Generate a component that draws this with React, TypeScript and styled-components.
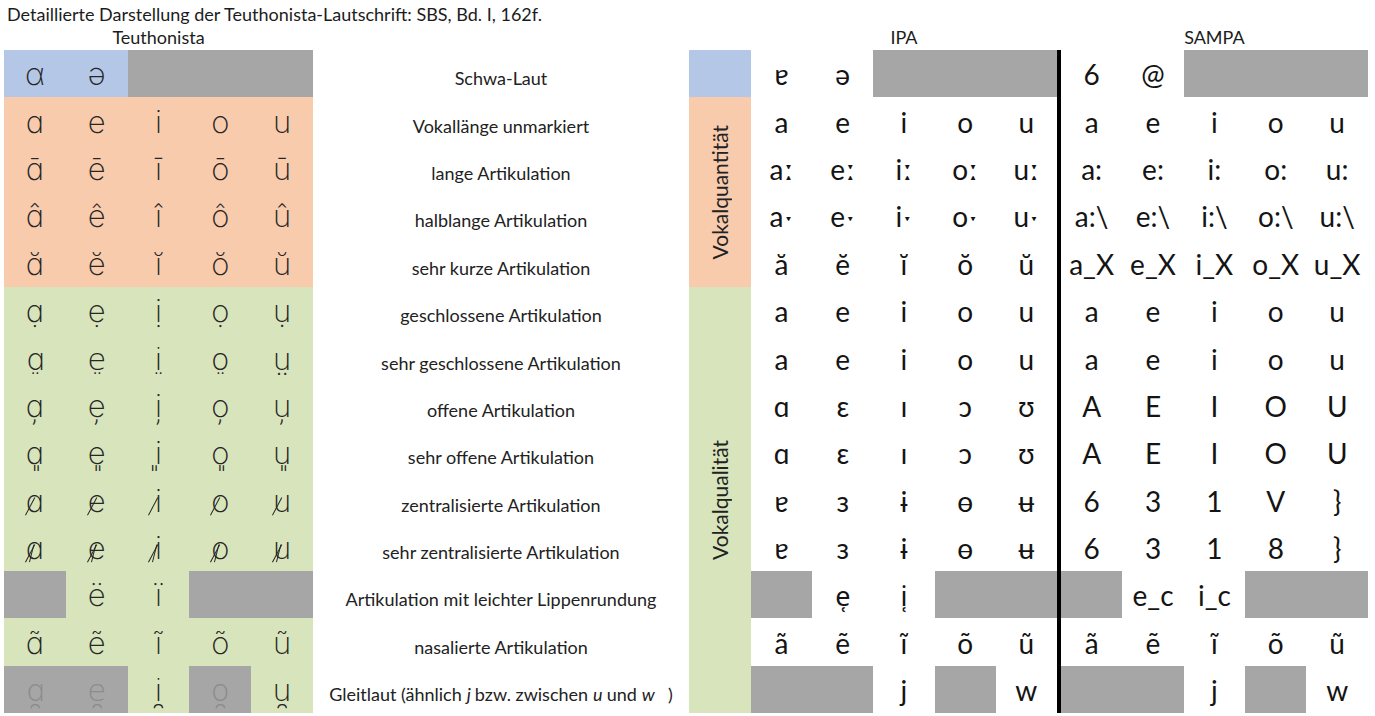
import React from 'react';
import styled, { createGlobalStyle, css } from 'styled-components';

const BLUE = '#b4c7e7';
const ORANGE = '#f8cbad';
const GREEN = '#d8e4bc';
const GRAY = '#a6a6a6';

const COLUMNS = 'repeat(5, 61.8px) 376px 62px repeat(5, 61.2px) 4px repeat(5, 61.4px)';

const GlobalStyle = createGlobalStyle`
  html, body {
    margin: 0;
    padding: 0;
    background: #ffffff;
  }
  body {
    font-family: Lato, "Open Sans", "Noto Sans", "DejaVu Sans", sans-serif;
    color: #1c1c1c;
  }
`;

const Page = styled.div`
  width: 1375px;
  height: 716px;
  padding-left: 4px;
  box-sizing: border-box;
  overflow: hidden;
`;

const Title = styled.div`
  height: 26px;
  box-sizing: border-box;
  padding: 5px 0 0 3px;
  font-size: 18px;
  line-height: 18px;
  white-space: nowrap;
`;

const HeaderRow = styled.div`
  display: grid;
  grid-template-columns: ${COLUMNS};
  height: 24px;
`;

const HeaderLabel = styled.div<{ $cols: string }>`
  grid-column: ${p => p.$cols};
  text-align: center;
  font-size: 18px;
  line-height: 18px;
  padding-top: 2px;
`;

const Sheet = styled.div`
  display: grid;
  grid-template-columns: ${COLUMNS};
  grid-template-rows: repeat(14, 47.36px);
`;

const BaseCell = styled.div`
  display: flex;
  align-items: flex-end;
  justify-content: center;
  box-sizing: border-box;
  white-space: nowrap;
`;

const TeuthCell = styled(BaseCell)<{ $bg: string; $muted?: boolean }>`
  background: ${p => p.$bg};
  color: ${p => (p.$muted ? '#8c8c8c' : '#262626')};
  font-family: Inter, "DejaVu Sans", sans-serif;
  font-weight: 200;
  font-size: 31px;
  line-height: 1;
  padding-bottom: 8px;
`;

const Glyph = styled.span<{ $slash?: number }>`
  position: relative;
  display: inline-block;
  ${p =>
    p.$slash &&
    css`
      &::before,
      &::after {
        content: '';
        position: absolute;
        width: 1.3px;
        background: #262626;
        transform-origin: bottom left;
      }
      &::before {
        left: calc(50% - 10px);
        bottom: 1px;
        height: 20px;
        transform: rotate(28deg);
      }
    `}
  ${p =>
    p.$slash === 2 &&
    css`
      &::after {
        left: calc(50% - 6px);
        bottom: 1px;
        height: 18px;
        transform: rotate(14deg);
      }
    `}
`;

const DescCell = styled(BaseCell)`
  font-size: 18px;
  line-height: 1;
  padding-bottom: 10px;
  color: #222;
`;

const Em = styled.i`
  margin: 0 4px 0 5px;
`;

const CategoryCell = styled.div<{ $bg: string; $start: number; $span: number }>`
  grid-column: 7;
  grid-row: ${p => p.$start} / span ${p => p.$span};
  background: ${p => p.$bg};
  display: flex;
  align-items: center;
  justify-content: center;
`;

const VerticalLabel = styled.span`
  writing-mode: vertical-rl;
  transform: rotate(180deg);
  font-size: 21px;
  color: #222;
`;

const Divider = styled.div`
  grid-column: 13;
  grid-row: 1 / span 14;
  background: #000;
`;

const SymbolCell = styled(BaseCell)<{ $blank?: boolean }>`
  background: ${p => (p.$blank ? GRAY : 'transparent')};
  font-size: 28px;
  line-height: 1;
  padding-bottom: 9px;
  color: #141414;
`;

// Lato has no anchor for the half ring below, so those two symbols use Noto Sans
const AltSymbol = styled.span`
  font-family: "Noto Sans", "DejaVu Sans", sans-serif;
  font-size: 27px;
`;

type TCell = { ch: string; muted?: boolean; slash?: number } | null;
type SCell = React.ReactNode | null;

interface Row {
  bg: string;
  teuth: TCell[];
  desc: React.ReactNode;
  ipa: SCell[];
  sampa: SCell[];
}

const t = (chars: string[], slash?: number): TCell[] => chars.map(ch => ({ ch, slash }));

const vowels = ['a', 'e', 'i', 'o', 'u'];
const teuthBase = ['ɑ', 'e', 'i', 'o', 'u'];
const mark = (m: string) => teuthBase.map(v => v + m);

const rows: Row[] = [
  {
    bg: BLUE,
    teuth: [{ ch: 'α' }, { ch: 'ə' }, null, null, null],
    desc: 'Schwa-Laut',
    ipa: ['ɐ', 'ə', null, null, null],
    sampa: ['6', '@', null, null, null],
  },
  { bg: ORANGE, teuth: t(teuthBase), desc: 'Vokallänge unmarkiert', ipa: vowels, sampa: vowels },
  {
    bg: ORANGE,
    teuth: t(mark('\u0304')),
    desc: 'lange Artikulation',
    ipa: vowels.map(v => v + 'ː'),
    sampa: vowels.map(v => v + ':'),
  },
  {
    bg: ORANGE,
    teuth: t(mark('\u0302')),
    desc: 'halblange Artikulation',
    ipa: vowels.map(v => v + 'ˑ'),
    sampa: vowels.map(v => v + ':\\'),
  },
  {
    bg: ORANGE,
    teuth: t(mark('\u0306')),
    desc: 'sehr kurze Artikulation',
    ipa: vowels.map(v => v + '\u0306'),
    sampa: vowels.map(v => v + '_X'),
  },
  { bg: GREEN, teuth: t(mark('\u0323')), desc: 'geschlossene Artikulation', ipa: vowels, sampa: vowels },
  { bg: GREEN, teuth: t(mark('\u0324')), desc: 'sehr geschlossene Artikulation', ipa: vowels, sampa: vowels },
  {
    bg: GREEN,
    teuth: t(mark('\u0326')),
    desc: 'offene Artikulation',
    ipa: ['ɑ', 'ɛ', 'ɪ', 'ɔ', 'ʊ'],
    sampa: ['A', 'E', 'I', 'O', 'U'],
  },
  {
    bg: GREEN,
    teuth: t(mark('\u0348')),
    desc: 'sehr offene Artikulation',
    ipa: ['ɑ', 'ɛ', 'ɪ', 'ɔ', 'ʊ'],
    sampa: ['A', 'E', 'I', 'O', 'U'],
  },
  {
    bg: GREEN,
    teuth: t(teuthBase, 1),
    desc: 'zentralisierte Artikulation',
    ipa: ['ɐ', 'ɜ', 'ɨ', 'ɵ', 'ʉ'],
    sampa: ['6', '3', '1', 'V', '}'],
  },
  {
    bg: GREEN,
    teuth: t(teuthBase, 2),
    desc: 'sehr zentralisierte Artikulation',
    ipa: ['ɐ', 'ɜ', 'ɨ', 'ɵ', 'ʉ'],
    sampa: ['6', '3', '1', '8', '}'],
  },
  {
    bg: GREEN,
    teuth: [null, { ch: 'ë' }, { ch: 'ï' }, null, null],
    desc: 'Artikulation mit leichter Lippenrundung',
    ipa: [null, <AltSymbol>e{'\u031c'}</AltSymbol>, <AltSymbol>i{'\u031c'}</AltSymbol>, null, null],
    sampa: [null, 'e_c', 'i_c', null, null],
  },
  {
    bg: GREEN,
    teuth: t(mark('\u0303')),
    desc: 'nasalierte Artikulation',
    ipa: vowels.map(v => v + '\u0303'),
    sampa: vowels.map(v => v + '\u0303'),
  },
  {
    bg: GREEN,
    teuth: [
      { ch: 'ɑ\u032f', muted: true },
      { ch: 'e\u032f', muted: true },
      { ch: 'i\u032f' },
      { ch: 'o\u032f', muted: true },
      { ch: 'u\u032f' },
    ],
    desc: (
      <>
        Gleitlaut (ähnlich<Em>j</Em> bzw. zwischen<Em>u</Em> und<Em>w</Em>&nbsp;&nbsp;)
      </>
    ),
    ipa: [null, null, 'j', null, 'w'],
    sampa: [null, null, 'j', null, 'w'],
  },
];

const Symbols = ({ cells, prefix }: { cells: SCell[]; prefix: string }) => (
  <>
    {cells.map((c, i) => (
      <SymbolCell key={prefix + i} $blank={c === null}>
        {c}
      </SymbolCell>
    ))}
  </>
);

export default function App() {
  return (
    <Page>
      <GlobalStyle />
      <Title>Detaillierte Darstellung der Teuthonista-Lautschrift: SBS, Bd. I, 162f.</Title>
      <HeaderRow>
        <HeaderLabel $cols="1 / span 5">Teuthonista</HeaderLabel>
        <HeaderLabel $cols="8 / span 5">IPA</HeaderLabel>
        <HeaderLabel $cols="14 / span 5">SAMPA</HeaderLabel>
      </HeaderRow>
      <Sheet>
        <CategoryCell $bg={BLUE} $start={1} $span={1} />
        <CategoryCell $bg={ORANGE} $start={2} $span={4}>
          <VerticalLabel>Vokalquantität</VerticalLabel>
        </CategoryCell>
        <CategoryCell $bg={GREEN} $start={6} $span={9}>
          <VerticalLabel>Vokalqualität</VerticalLabel>
        </CategoryCell>
        <Divider />
        {rows.map((row, r) => (
          <React.Fragment key={r}>
            {row.teuth.map((c, i) => (
              <TeuthCell key={'t' + i} $bg={c === null || c.muted ? GRAY : row.bg} $muted={c?.muted}>
                {c && <Glyph $slash={c.slash}>{c.ch}</Glyph>}
              </TeuthCell>
            ))}
            <DescCell>{row.desc}</DescCell>
            <Symbols cells={row.ipa} prefix="i" />
            <Symbols cells={row.sampa} prefix="s" />
          </React.Fragment>
        ))}
      </Sheet>
    </Page>
  );
}
